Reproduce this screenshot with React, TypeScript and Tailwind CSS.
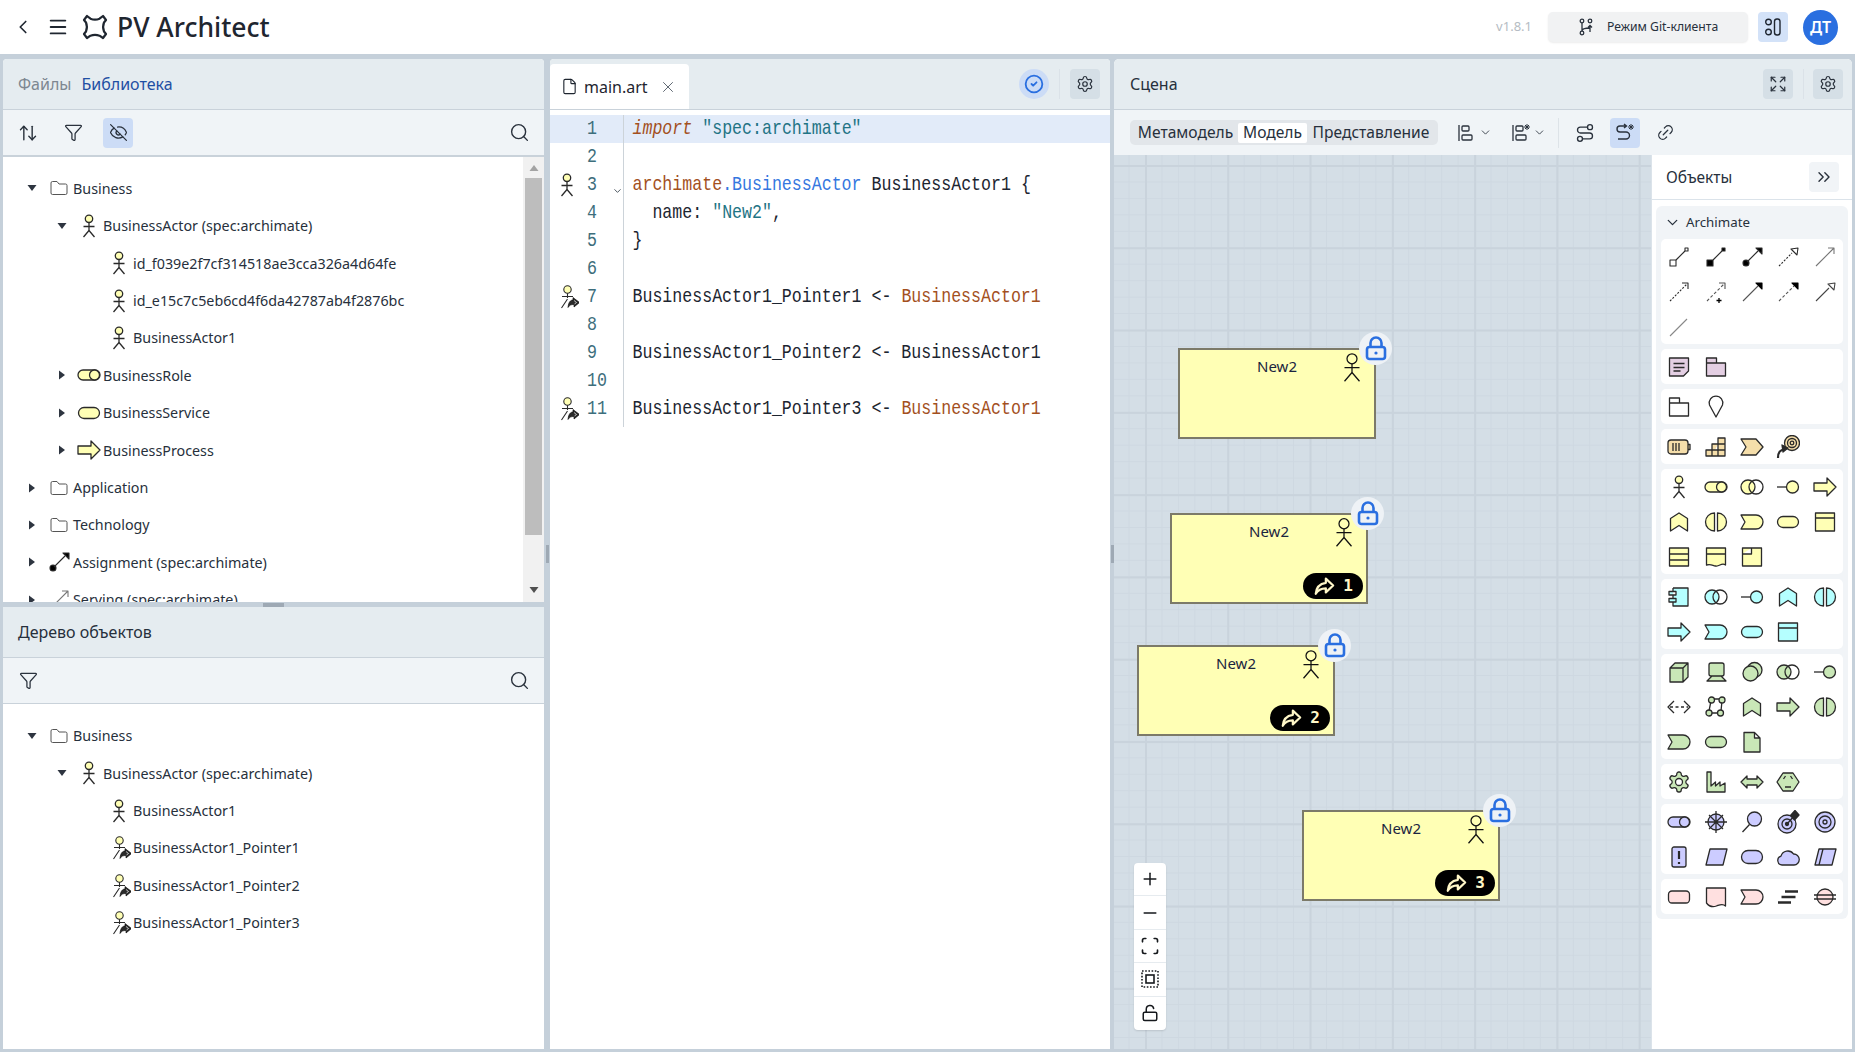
import type { ReactNode } from "react";
import {
  ArrowUpDown,
  ChevronDown,
  ChevronLeft,
  ChevronsRight,
  CircleCheck,
  EyeOff,
  Expand,
  File,
  Funnel,
  Link2,
  LockOpen,
  Menu,
  Minus,
  Plus,
  Route,
  Scan,
  Search,
  Settings,
  X,
} from "lucide-react";

const YELLOW = "#ffffb5";
const CYAN = "#b5ffff";
const GREEN = "#c9e7b7";
const ORANGE = "#f5deaa";
const VIOLET = "#ccccff";
const ROSE = "#ffe0e0";
const PINK = "#e4cfe3";
const INK = "#2a2a2a";

const GEAR =
  "M12.22 2h-.44a2 2 0 0 0-2 2v.18a2 2 0 0 1-1 1.73l-.43.25a2 2 0 0 1-2 0l-.15-.08a2 2 0 0 0-2.73.73l-.22.38a2 2 0 0 0 .73 2.73l.15.1a2 2 0 0 1 1 1.72v.51a2 2 0 0 1-1 1.74l-.15.09a2 2 0 0 0-.73 2.73l.22.38a2 2 0 0 0 2.73.73l.15-.08a2 2 0 0 1 2 0l.43.25a2 2 0 0 1 1 1.73V20a2 2 0 0 0 2 2h.44a2 2 0 0 0 2-2v-.18a2 2 0 0 1 1-1.73l.43-.25a2 2 0 0 1 2 0l.15.08a2 2 0 0 0 2.73-.73l.22-.39a2 2 0 0 0-.73-2.73l-.15-.08a2 2 0 0 1-1-1.74v-.5a2 2 0 0 1 1-1.74l.15-.09a2 2 0 0 0 .73-2.73l-.22-.38a2 2 0 0 0-2.73-.73l-.15.08a2 2 0 0 1-2 0l-.43-.25a2 2 0 0 1-1-1.73V4a2 2 0 0 0-2-2z";

function shape(name: string, f: string): ReactNode {
  switch (name) {
    case "actor":
      return (
        <>
          <circle cx="12" cy="4.800" r="3.700" fill={f} />
          <path d="M12 8.500V16.500M6.500 12.500h11M12 16.500l-5.500 6.500M12 16.500l5.500 6.500" fill="none" />
        </>
      );
    case "role":
      return (
        <>
          <path d="M6 7h12a5 5 0 0 1 0 10H6a5 5 0 0 1 0-10z" fill={f} />
          <circle cx="17.500" cy="12" r="5" fill={f} />
        </>
      );
    case "collab":
      return (
        <>
          <circle cx="8" cy="12" r="7" fill={f} />
          <circle cx="16" cy="12" r="7" fill="none" />
        </>
      );
    case "iface":
      return (
        <>
          <path d="M1 12h9" />
          <circle cx="16.500" cy="12" r="6" fill={f} />
        </>
      );
    case "process":
      return <path d="M1 8h13V3l9 9-9 9v-5H1z" fill={f} />;
    case "func":
      return <path d="M3.500 21V8.500L12 3l8.500 5.500V21L12 15.500z" fill={f} />;
    case "interaction":
      return <path d="M10.500 3a9 9 0 0 0 0 18zM13.500 3a9 9 0 0 1 0 18z" fill={f} />;
    case "event":
      return <path d="M1 5h15a7 7 0 0 1 0 14H1l4-7z" fill={f} />;
    case "service":
      return <path d="M7 6.500h10a5.500 5.500 0 0 1 0 11H7a5.500 5.500 0 0 1 0-11z" fill={f} />;
    case "object":
      return <path d="M2.500 3h19v18h-19zM2.500 8h19" fill={f} />;
    case "contract":
      return <path d="M2.500 3h19v18h-19zM2.500 9h19M2.500 15h19" fill={f} />;
    case "repr":
      return <path d="M2.500 3h19v17c-4-3-6 2-10 1s-5-2-9-1zM2.500 9h19" fill={f} />;
    case "product":
      return <path d="M2.500 3h19v18h-19zM2.500 9h9V3" fill={f} />;
    case "component":
      return <path d="M6 3h15v18H6v-4H2v-3.500h7V17H6M6 13.500V10M6 3v3.500H2V10h7V6.500H6" fill={f} />;
    case "node":
      return <path d="M3 8l5-5h13v14l-5 5H3zM3 8h13v14M16 8l5-5" fill={f} />;
    case "device":
      return <path d="M7 3h11a2 2 0 0 1 2 2v9a2 2 0 0 1-2 2H7a2 2 0 0 1-2-2V5a2 2 0 0 1 2-2zM8 16l-5 5h19l-5-5" fill={f} />;
    case "syssw":
      return (
        <>
          <circle cx="14.500" cy="10" r="7.500" fill={f} />
          <circle cx="10.500" cy="13.500" r="7.500" fill={f} />
        </>
      );
    case "path":
      return (
        <>
          <path d="M7 6l-6 6 6 6M17 6l6 6-6 6" fill="none" />
          <path d="M3 12h18" strokeDasharray="3 2.500" fill="none" />
        </>
      );
    case "network":
      return (
        <>
          <path d="M8 4h10M5 18h12M7 6l-2 10M18 6l-1 10" fill="none" />
          <circle cx="7.500" cy="5" r="3" fill={f} />
          <circle cx="18" cy="5" r="3" fill={f} />
          <circle cx="5" cy="18" r="3" fill={f} />
          <circle cx="16.500" cy="18" r="3" fill={f} />
        </>
      );
    case "artifact":
      return <path d="M4 2.500h10.500l5.500 5.500v14H4zM14.500 2.500V8H20" fill={f} />;
    case "equipment":
      return (
        <>
          <path d={GEAR} fill={f} />
          <circle cx="12" cy="12" r="3.500" fill="#fff" />
        </>
      );
    case "factory":
      return <path d="M3 2h4v14l4.500-4v4l4.500-4v4l5-3v9H3z" fill={f} />;
    case "distribution":
      return <path d="M1 12l6-6v3h10V6l6 6-6 6v-3H7v3z" fill={f} />;
    case "material":
      return <path d="M7 3h10l6 9-6 9H7l-6-9zM7.500 9l2-3M16.500 9l-2-3M9 17h6" fill={f} />;
    case "driver":
      return (
        <>
          <circle cx="12" cy="12" r="8" fill={f} />
          <path d="M1 12h22M12 1v22M5 5l14 14M19 5L5 19" fill="none" />
        </>
      );
    case "assessment":
      return (
        <>
          <path d="M9.500 14.500L2.500 22" fill="none" />
          <circle cx="14.500" cy="9" r="7" fill={f} />
        </>
      );
    case "outcome":
      return (
        <>
          <circle cx="11" cy="14" r="9" fill={f} />
          <circle cx="11" cy="14" r="5" fill={f} />
          <circle cx="11" cy="14" r="1.500" fill={INK} />
          <path d="M11 14L19 5" fill="none" />
          <path d="M14.500 5.500L19 .5l4 4.500-4.500 5z" fill={INK} />
        </>
      );
    case "goal":
      return (
        <>
          <circle cx="12" cy="12" r="10" fill={f} />
          <circle cx="12" cy="12" r="6" fill={f} />
          <circle cx="12" cy="12" r="2" fill={f} />
        </>
      );
    case "principle":
      return (
        <>
          <path d="M7 2h10a2 2 0 0 1 2 2v16a2 2 0 0 1-2 2H7a2 2 0 0 1-2-2V4a2 2 0 0 1 2-2z" fill={f} />
          <path d="M12 6v8M12 17v2" strokeWidth="2.200" fill="none" />
        </>
      );
    case "requirement":
      return <path d="M6 4h17l-4 16H2z" fill={f} />;
    case "value":
      return <path d="M8 5.500h8a6.500 6.500 0 0 1 0 13H8a6.500 6.500 0 0 1 0-13z" fill={f} />;
    case "meaning":
      return <path d="M6 20a4.500 4.500 0 0 1-1-8.800A7 7 0 0 1 17.500 9 5.500 5.500 0 0 1 18 20z" fill={f} />;
    case "constraint":
      return <path d="M6 4h17l-4 16H2zM10 4L6 20" fill={f} />;
    case "work":
      return <rect x="1.500" y="6" width="21" height="12" rx="3.500" fill={f} />;
    case "deliverable":
      return <path d="M2.500 3h19v18c-3-3-6-1-9 0s-7 1-10-3z" fill={f} />;
    case "plateau":
      return <path d="M9 6.500h13M5.500 12h14M2 17.500h13" strokeWidth="2.400" fill="none" />;
    case "gap":
      return (
        <>
          <circle cx="12" cy="12" r="8" fill={f} />
          <path d="M1 10h22M1 14h22" fill="none" />
        </>
      );
    case "resource":
      return (
        <>
          <path d="M4 5h14a3 3 0 0 1 3 3v8a3 3 0 0 1-3 3H4a3 3 0 0 1-3-3V8a3 3 0 0 1 3-3zM21 9.500h2v5h-2" fill={f} />
          <path d="M6 8v8M9 8v8M12 8v8" fill="none" />
        </>
      );
    case "capability":
      return <path d="M2 21v-6h6V9h6V3h7v18zM8 21v-6h6V9M14 21v-6h7M2 15h6M14 9h7" fill={f} />;
    case "stream":
      return <path d="M1 4h15l7 8-7 8H1l5-8z" fill={f} />;
    case "course":
      return (
        <>
          <circle cx="16" cy="8" r="7.500" fill={f} />
          <circle cx="16" cy="8" r="4.500" fill={f} />
          <circle cx="16" cy="8" r="1.800" fill={f} />
          <path d="M2 23c0-6 2-8 7-9" strokeWidth="2.200" fill="none" />
          <path d="M6 10l6 3-5 4z" fill={INK} />
        </>
      );
    case "note":
      return <path d="M2.500 3h19v13l-5 5h-14zM6.500 8.500h11M6.500 12.500h11M6.500 16h7" fill={f} />;
    case "group":
      return <path d="M2.500 8V3h10v5h9v13h-19zM2.500 8h10" fill={f} />;
    case "location":
      return <path d="M12 22L5.500 10a6.800 6.800 0 1 1 13 0z" fill={f} />;
    case "comp":
      return (
        <g strokeWidth="1.100" fill="none">
          <rect x="3" y="15" width="6" height="6" />
          <path d="M9 15l9-9" />
          <rect x="18" y="3" width="3" height="3" />
        </g>
      );
    case "agg":
      return (
        <g strokeWidth="1.100">
          <rect x="3" y="15" width="6" height="6" fill="#000" />
          <path d="M9 15l9-9" />
          <rect x="18" y="3" width="3" height="3" fill="#000" />
        </g>
      );
    case "assign":
      return (
        <g strokeWidth="1.100">
          <circle cx="6" cy="18" r="3" fill="#000" />
          <path d="M7 17L18 6" />
          <path d="M16 3h6v6z" fill="#000" />
        </g>
      );
    case "realize":
      return (
        <g strokeWidth="1.100">
          <path d="M3 21l13-13" strokeDasharray="2 1.500" fill="none" />
          <path d="M15 4l7-1-1 7z" fill="#fff" />
        </g>
      );
    case "serving":
      return <path d="M3 21L21 3M15 3h6v6" fill="none" stroke="#777" strokeWidth="1.100" />;
    case "access":
      return (
        <g strokeWidth="1.100" fill="none">
          <path d="M3 21L20 4" strokeDasharray="2 1.500" />
          <path d="M15 3h6v6" />
        </g>
      );
    case "influence":
      return (
        <g strokeWidth="1.100" fill="none" stroke="#555">
          <path d="M3 21L20 4" strokeDasharray="3 2" />
          <path d="M15 3h6v6" />
          <path d="M15 18v5M12.500 20.500h5" stroke="#000" strokeWidth="1.300" />
        </g>
      );
    case "trigger":
      return (
        <g strokeWidth="1.100" stroke="#555">
          <path d="M3 21L18 6" />
          <path d="M16 3h6v6z" fill="#000" stroke="#000" />
        </g>
      );
    case "flow":
      return (
        <g strokeWidth="1.100" stroke="#555">
          <path d="M3 21L18 6" strokeDasharray="3 2" />
          <path d="M16 3h6v6z" fill="#000" stroke="#000" />
        </g>
      );
    case "special":
      return (
        <g strokeWidth="1.100" stroke="#444">
          <path d="M3 21l13-13" />
          <path d="M15 4l7-1-1 7z" fill="#fff" />
        </g>
      );
    case "assoc":
      return <path d="M3 21L20 4" stroke="#888" strokeWidth="1.100" />;
    case "folder":
      return <path d="M4 7a1.500 1.500 0 0 1 1.500-1.500h4.500l2 2.500h6.500A1.500 1.500 0 0 1 20 9.500v7.500a1.500 1.500 0 0 1-1.500 1.500h-13A1.500 1.500 0 0 1 4 17z" fill="#fff" stroke="#555" strokeWidth="1" />;
    case "pointer":
      return (
        <>
          <g strokeWidth="1.100">
            <circle cx="12.500" cy="4.500" r="3.700" fill={f} />
            <path d="M12.500 8.200V13M7 11.500h11M12.500 14l-6 9" fill="none" />
          </g>
          <path d="M18 12.500l6.500 5-5.500 4.500v-2.500c-3 0-4.500 .5-6 3 .5-5.500 2.500-7.500 5-7.500z" fill={INK} stroke="#000" strokeWidth=".6" />
          <path d="M19 15.500l2.500 2-2 1.500" fill="none" stroke="#fff" strokeWidth=".7" />
        </>
      );
    default:
      return null;
  }
}

function Glyph({ name, fill = "#fff", size = 24 }: { name: string; fill?: string; size?: number }) {
  return (
    <svg width={size} height={size} viewBox="0 0 24 24" stroke={INK} strokeWidth="1.300" strokeLinejoin="round" className="shrink-0">
      {shape(name, fill)}
    </svg>
  );
}

function Logo() {
  return (
    <svg width="26" height="26" viewBox="0 0 26 26" fill="none" stroke="#1f2630" strokeWidth="2.200" strokeLinejoin="round">
      <path d="M5 2l3.500 2.700c3 1.300 6 1.300 9 0L21 2l3 4-2 2.500c-1.200 3-1.200 6 0 9l2 2.500-3 4-3.500-2.300c-3-1.200-6-1.200-9 0L5 24l-3-4 2-2.500c1.200-3 1.200-6 0-9L2 6z" />
    </svg>
  );
}

function Triangle({ open }: { open: boolean }) {
  return open ? (
    <svg width="10" height="6" viewBox="0 0 10 6" fill="#2e3540">
      <path d="M0.500 0h9L5 6z" />
    </svg>
  ) : (
    <svg width="6" height="10" viewBox="0 0 6 10" fill="#2e3540">
      <path d="M0 .5v9L6 5z" />
    </svg>
  );
}

const INDENT = ["pl-[24px]", "pl-[54px]", "pl-[84px]"];

function TreeRow(props: { level: number; open?: boolean; icon: string; fill?: string; label: string }) {
  return (
    <div className={`flex h-[37.4px] shrink-0 items-center ${INDENT[props.level]}`}>
      <span className="flex w-[10px] justify-center">
        {props.open !== undefined && <Triangle open={props.open} />}
      </span>
      <span className="flex w-[36px] justify-end pr-[2px]">
        <Glyph name={props.icon} fill={props.fill} />
      </span>
      <span className="whitespace-nowrap text-[14.3px] text-[#27303c]">{props.label}</span>
    </div>
  );
}

function TitleBar({ children }: { children: ReactNode }) {
  return (
    <div className="flex h-[51px] shrink-0 items-center border-b border-[#c9d2da] bg-[#e5ecf0]">{children}</div>
  );
}

function IconBtn({ children, active, soft }: { children: ReactNode; active?: boolean; soft?: boolean }) {
  return (
    <button
      className={`flex h-[30px] w-[30px] items-center justify-center rounded-[4px] text-[#2a323d] ${
        active ? "bg-[#ccdcf6]" : soft ? "bg-[#d5dfe6]" : ""
      }`}
    >
      {children}
    </button>
  );
}

function Scrollbar() {
  return (
    <div className="flex w-[21px] shrink-0 flex-col items-center bg-[#f1f1f1]">
      <div className="flex h-[21px] w-full shrink-0 items-center justify-center">
        <svg width="10" height="6" viewBox="0 0 10 6" fill="#a3a3a3">
          <path d="M0.500 6h9L5 0z" />
        </svg>
      </div>
      <div className="h-[357px] w-[17px] shrink-0 bg-[#bdbdbd]" />
      <div className="flex flex-1 items-end pb-[9px]">
        <svg width="10" height="6" viewBox="0 0 10 6" fill="#505050">
          <path d="M0.500 0h9L5 6z" />
        </svg>
      </div>
    </div>
  );
}

function LeftColumn() {
  return (
    <div className="flex w-[541px] shrink-0 flex-col">
      <section className="flex h-[543px] shrink-0 flex-col overflow-hidden rounded-t-[4px] bg-white">
        <TitleBar>
          <span className="ml-[15px] text-[16px] text-[#7d8791]">Файлы</span>
          <span className="ml-[10px] text-[16px] text-[#1f4fa3]">Библиотека</span>
        </TitleBar>
        <div className="flex h-[47px] shrink-0 items-center border-b-2 border-[#c9d2da] bg-[#f0f4f7] pl-[10px] pr-[10px]">
          <IconBtn>
            <ArrowUpDown size={20} strokeWidth={1.7} />
          </IconBtn>
          <span className="ml-[15px]">
            <IconBtn>
              <Funnel size={19} strokeWidth={1.6} />
            </IconBtn>
          </span>
          <span className="ml-[15px]">
            <IconBtn active>
              <EyeOff size={19} strokeWidth={1.6} />
            </IconBtn>
          </span>
          <span className="ml-auto">
            <IconBtn>
              <Search size={21} strokeWidth={1.6} />
            </IconBtn>
          </span>
        </div>
        <div className="flex min-h-0 flex-1">
          <div className="min-w-0 flex-1 overflow-hidden pt-[12.800px]">
            <TreeRow level={0} open icon="folder" label="Business" />
            <TreeRow level={1} open icon="actor" fill={YELLOW} label="BusinessActor (spec:archimate)" />
            <TreeRow level={2} icon="actor" fill={YELLOW} label="id_f039e2f7cf314518ae3cca326a4d64fe" />
            <TreeRow level={2} icon="actor" fill={YELLOW} label="id_e15c7c5eb6cd4f6da42787ab4f2876bc" />
            <TreeRow level={2} icon="actor" fill={YELLOW} label="BusinessActor1" />
            <TreeRow level={1} open={false} icon="role" fill={YELLOW} label="BusinessRole" />
            <TreeRow level={1} open={false} icon="service" fill={YELLOW} label="BusinessService" />
            <TreeRow level={1} open={false} icon="process" fill={YELLOW} label="BusinessProcess" />
            <TreeRow level={0} open={false} icon="folder" label="Application" />
            <TreeRow level={0} open={false} icon="folder" label="Technology" />
            <TreeRow level={0} open={false} icon="assign" label="Assignment (spec:archimate)" />
            <TreeRow level={0} open={false} icon="serving" label="Serving (spec:archimate)" />
          </div>
          <Scrollbar />
        </div>
      </section>
      <div className="flex h-[5px] shrink-0 items-center justify-center">
        <div className="h-[4px] w-[21px] bg-[#9ea9b4]" />
      </div>
      <section className="flex min-h-0 flex-1 flex-col overflow-hidden bg-white">
        <TitleBar>
          <span className="ml-[15px] text-[16px] text-[#27303c]">Дерево объектов</span>
        </TitleBar>
        <div className="flex h-[46px] shrink-0 items-center border-b border-[#c9d2da] bg-[#f0f4f7] px-[10px]">
          <IconBtn>
            <Funnel size={19} strokeWidth={1.6} />
          </IconBtn>
          <span className="ml-auto">
            <IconBtn>
              <Search size={21} strokeWidth={1.6} />
            </IconBtn>
          </span>
        </div>
        <div className="pt-[13.300px]">
          <TreeRow level={0} open icon="folder" label="Business" />
          <TreeRow level={1} open icon="actor" fill={YELLOW} label="BusinessActor (spec:archimate)" />
          <TreeRow level={2} icon="actor" fill={YELLOW} label="BusinessActor1" />
          <TreeRow level={2} icon="pointer" fill={YELLOW} label="BusinessActor1_Pointer1" />
          <TreeRow level={2} icon="pointer" fill={YELLOW} label="BusinessActor1_Pointer2" />
          <TreeRow level={2} icon="pointer" fill={YELLOW} label="BusinessActor1_Pointer3" />
        </div>
      </section>
    </div>
  );
}

const BROWN = "text-[#a3501e]";
const BLUE = "text-[#3577e0]";
const TEAL = "text-[#1f7485]";
const DARK = "text-[#1c2530]";

type Line = { gutter?: string; fold?: boolean; body?: ReactNode };

const CODE: Line[] = [
  {
    body: (
      <>
        <span className={`${BROWN} italic`}>import</span> <span className={TEAL}>"spec:archimate"</span>
      </>
    ),
  },
  {},
  {
    gutter: "actor",
    fold: true,
    body: (
      <>
        <span className={BROWN}>archimate</span>
        <span className={BLUE}>.BusinessActor</span> <span className={DARK}>BusinessActor1 {"{"}</span>
      </>
    ),
  },
  {
    body: (
      <>
        <span className={DARK}>{"  name: "}</span>
        <span className={TEAL}>"New2"</span>
        <span className={DARK}>,</span>
      </>
    ),
  },
  { body: <span className={DARK}>{"}"}</span> },
  {},
  {
    gutter: "pointer",
    body: (
      <>
        <span className={DARK}>{"BusinessActor1_Pointer1 <- "}</span>
        <span className={BROWN}>BusinessActor1</span>
      </>
    ),
  },
  {},
  { body: <span className={DARK}>{"BusinessActor1_Pointer2 <- BusinessActor1"}</span> },
  {},
  {
    gutter: "pointer",
    body: (
      <>
        <span className={DARK}>{"BusinessActor1_Pointer3 <- "}</span>
        <span className={BROWN}>BusinessActor1</span>
      </>
    ),
  },
];

function Editor() {
  return (
    <section className="flex w-[560px] shrink-0 flex-col overflow-hidden rounded-t-[4px] bg-white">
      <div className="flex h-[51px] shrink-0 items-end border-b border-[#c9d2da] bg-[#e5ecf0]">
        <div className="flex h-[45px] w-[139px] items-center rounded-t-[4px] bg-white pl-[11px] text-[#1f2630]">
          <File size={17} strokeWidth={1.6} />
          <span className="ml-[6px] text-[16px]">main.art</span>
          <X size={18} strokeWidth={1.3} className="ml-[11px] text-[#5d6670]" />
        </div>
        <div className="ml-auto flex h-full items-center pr-[10px]">
          <button className="flex h-[30px] w-[30px] items-center justify-center rounded-full bg-[#ccdcf6] text-[#2a6fe0]">
            <CircleCheck size={20} strokeWidth={2.200} />
          </button>
          <div className="mx-[10px] h-[30px] w-px bg-[#dbe2e8]" />
          <IconBtn soft>
            <Settings size={18} strokeWidth={1.6} />
          </IconBtn>
        </div>
      </div>
      <div className="pt-[5px] font-['Liberation_Mono',monospace] text-[16.600px]">
        {CODE.map((line, i) => (
          <div key={i} className={`flex h-[28px] items-center ${i === 0 ? "bg-[#e2ebf9]" : ""}`}>
            <div className="flex h-full w-[74px] shrink-0 items-center border-r border-[#ccd3d9]">
              <span className="flex w-[37px] shrink-0 justify-center pr-[3px]">
                {line.gutter && <Glyph name={line.gutter} fill={YELLOW} />}
              </span>
              <span className="w-[25px] shrink-0 origin-center scale-y-[1.2] text-[#3d6e7c]">{i + 1}</span>
              {line.fold && <ChevronDown size={12} strokeWidth={2} className="mt-[11px] text-[#3f4a54]" />}
            </div>
            <div className="origin-center scale-y-[1.2] whitespace-pre pl-[8.500px]">{line.body}</div>
          </div>
        ))}
        <div className="h-[4px] w-[74px] border-r border-[#ccd3d9]" />
      </div>
    </section>
  );
}

function LockBadge() {
  return (
    <span className="absolute right-[-18px] top-[-18px] flex h-[33px] w-[33px] items-center justify-center rounded-full bg-[#eef2f6]">
      <svg width="24" height="26" viewBox="0 0 24 26" fill="none" stroke="#2a6fe0" strokeWidth="2.600">
        <rect x="3" y="11" width="18" height="12" rx="2.500" />
        <path d="M6.500 11V7a5.500 5.500 0 0 1 11 0v4" />
        <circle cx="12" cy="17" r="1.600" fill="#2a6fe0" stroke="none" />
      </svg>
    </span>
  );
}

function Share({ size = 22 }: { size?: number }) {
  return (
    <svg width={size} height={size} viewBox="0 0 24 24" fill="#000" stroke="#fff7c8" strokeWidth="2.400" strokeLinejoin="round">
      <path d="M14 4l8 7.500L14 19v-4.500c-5 0-8.500 1.500-11 6 .5-7 4.500-11 11-12z" />
    </svg>
  );
}

const NODE_POS = [
  { pos: "left-[64px] top-[193px]" },
  { pos: "left-[56px] top-[358px]", n: 1 },
  { pos: "left-[23px] top-[490px]", n: 2 },
  { pos: "left-[188px] top-[655px]", n: 3 },
];

function ElementNode({ pos, n }: { pos: string; n?: number }) {
  return (
    <div className={`absolute h-[91px] w-[198px] border-2 border-[#7c7a69] bg-[#ffffb5] ${pos}`}>
      <span className="absolute left-0 right-0 top-[5px] text-center text-[15px] text-[#1b2540]">New2</span>
      <span className="absolute right-[7px] top-[2px]">
        <svg width="30" height="31" viewBox="0 0 24 24" fill="none" stroke="#111" strokeWidth="1">
          <circle cx="12" cy="5" r="4" />
          <path d="M12 9v7M6 12h12M12 16l-6 7M12 16l6 7" />
        </svg>
      </span>
      <LockBadge />
      {n && (
        <span className="absolute bottom-[3px] right-[3px] flex h-[26px] w-[60px] items-center justify-center gap-[8px] rounded-full bg-black">
          <Share />
          <span className="font-['DejaVu_Sans_Mono',monospace] text-[16px] font-bold text-[#fff7c8]">{n}</span>
        </span>
      )}
    </div>
  );
}

function ZoomBar() {
  const cell = "flex h-[33.400px] items-center justify-center border-b border-[#e6ebef] text-[#16191d] last:border-b-0";
  return (
    <div className="absolute left-[20px] top-[708px] w-[32px] rounded-[4px] bg-white shadow-[0_1px_2px_rgba(0,0,0,0.12)]">
      <div className={cell}>
        <Plus size={20} strokeWidth={1.800} />
      </div>
      <div className={cell}>
        <Minus size={20} strokeWidth={1.800} />
      </div>
      <div className={cell}>
        <Scan size={20} strokeWidth={2} />
      </div>
      <div className={cell}>
        <svg width="18" height="18" viewBox="0 0 18 18" fill="none" stroke="#16191d">
          <rect x="1" y="1" width="16" height="16" strokeWidth="1.600" strokeDasharray="1.600 1.600" />
          <rect x="5" y="5" width="8" height="8" strokeWidth="1.600" />
        </svg>
      </div>
      <div className={cell}>
        <LockOpen size={18} strokeWidth={2} />
      </div>
    </div>
  );
}

const PALETTE: { items: [string, string?][] }[] = [
  {
    items: [
      ["comp"], ["agg"], ["assign"], ["realize"], ["serving"],
      ["access"], ["influence"], ["trigger"], ["flow"], ["special"],
      ["assoc"],
    ],
  },
  { items: [["note", PINK], ["group", PINK]] },
  { items: [["group", "#fff"], ["location", "#fff"]] },
  { items: [["resource", ORANGE], ["capability", ORANGE], ["stream", ORANGE], ["course", ORANGE]] },
  {
    items: [
      ["actor", YELLOW], ["role", YELLOW], ["collab", YELLOW], ["iface", YELLOW], ["process", YELLOW],
      ["func", YELLOW], ["interaction", YELLOW], ["event", YELLOW], ["service", YELLOW], ["object", YELLOW],
      ["contract", YELLOW], ["repr", YELLOW], ["product", YELLOW],
    ],
  },
  {
    items: [
      ["component", CYAN], ["collab", CYAN], ["iface", CYAN], ["func", CYAN], ["interaction", CYAN],
      ["process", CYAN], ["event", CYAN], ["service", CYAN], ["object", CYAN],
    ],
  },
  {
    items: [
      ["node", GREEN], ["device", GREEN], ["syssw", GREEN], ["collab", GREEN], ["iface", GREEN],
      ["path", GREEN], ["network", GREEN], ["func", GREEN], ["process", GREEN], ["interaction", GREEN],
      ["event", GREEN], ["service", GREEN], ["artifact", GREEN],
    ],
  },
  { items: [["equipment", GREEN], ["factory", GREEN], ["distribution", GREEN], ["material", GREEN]] },
  {
    items: [
      ["role", VIOLET], ["driver", VIOLET], ["assessment", VIOLET], ["outcome", VIOLET], ["goal", VIOLET],
      ["principle", VIOLET], ["requirement", VIOLET], ["value", VIOLET], ["meaning", VIOLET], ["constraint", VIOLET],
    ],
  },
  { items: [["work", ROSE], ["deliverable", ROSE], ["event", ROSE], ["plateau", ROSE], ["gap", ROSE]] },
];

function ObjectsPanel() {
  return (
    <aside className="flex w-[201px] shrink-0 flex-col border-l border-[#dbe3ea] bg-white">
      <div className="flex h-[45px] shrink-0 items-center border-b border-[#dbe3ea] pl-[14px] pr-[13px]">
        <span className="mt-[2px] text-[15.500px] text-[#27303c]">Объекты</span>
        <button className="ml-auto flex h-[30px] w-[30px] items-center justify-center rounded-[4px] bg-[#f1f4f7] text-[#2a323d]">
          <ChevronsRight size={20} strokeWidth={1.700} />
        </button>
      </div>
      <div className="mx-[4px] mt-[6px] rounded-[6px] bg-[#f1f4f7] px-[5px] pb-[5px]">
        <div className="flex h-[33px] items-center text-[#27303c]">
          <ChevronDown size={17} strokeWidth={1.800} className="ml-[3px]" />
          <span className="ml-[5px] text-[13.300px]">Archimate</span>
        </div>
        <div className="flex flex-col gap-[5px]">
          {PALETTE.map((group, i) => (
            <div key={i} className="grid grid-cols-5 rounded-[5px] bg-white">
              {group.items.map(([name, fill], j) => (
                <span key={j} className="flex h-[35px] items-center justify-center">
                  <Glyph name={name} fill={fill} />
                </span>
              ))}
            </div>
          ))}
        </div>
      </div>
    </aside>
  );
}

function AlignIcon({ spark }: { spark?: boolean }) {
  return (
    <svg width="20" height="20" viewBox="0 0 20 20" fill="none" stroke="#2a323d" strokeWidth="1.300">
      <path d="M2 2v16" />
      <rect x="5" y="3" width="7" height="5" rx="1" />
      <rect x="5" y="12" width="10" height="5" rx="1" />
      {spark && <path d="M16 1v6M13 4h6M14 2l4 4M18 2l-4 4" strokeWidth="1" />}
    </svg>
  );
}

function Scene() {
  return (
    <section className="flex min-w-0 flex-1 flex-col overflow-hidden rounded-t-[5px] bg-white">
      <TitleBar>
        <span className="ml-[16px] text-[16px] text-[#27303c]">Сцена</span>
        <div className="ml-auto flex items-center pr-[9px]">
          <IconBtn soft>
            <Expand size={18} strokeWidth={1.600} />
          </IconBtn>
          <div className="mx-[9.500px] h-[30px] w-px bg-[#dbe2e8]" />
          <IconBtn soft>
            <Settings size={18} strokeWidth={1.600} />
          </IconBtn>
        </div>
      </TitleBar>
      <div className="flex h-[45px] shrink-0 items-center bg-[#f0f4f7] pl-[16px]">
        <div className="flex h-[25px] w-[308px] items-center rounded-[5px] bg-[#e2e6ea] px-[3px] text-[15.600px] text-[#27303c]">
          <span className="w-[105px] shrink-0 text-center">Метамодель</span>
          <span className="flex h-[20px] w-[69px] shrink-0 items-center justify-center rounded-[2px] bg-white">Модель</span>
          <span className="flex-1 whitespace-nowrap text-center">Представление</span>
        </div>
        <span className="ml-[19px] flex items-center gap-[2px]">
          <AlignIcon />
          <ChevronDown size={13} strokeWidth={1.600} className="text-[#2a323d]" />
        </span>
        <span className="ml-[19px] flex items-center gap-[2px]">
          <AlignIcon spark />
          <ChevronDown size={13} strokeWidth={1.600} className="text-[#2a323d]" />
        </span>
        <div className="ml-[12px] mr-[11px] h-[30px] w-px bg-[#dde3e8]" />
        <IconBtn>
          <Route size={20} strokeWidth={1.600} />
        </IconBtn>
        <span className="ml-[10px]">
          <IconBtn active>
            <svg width="20" height="20" viewBox="0 0 20 20" fill="none" stroke="#2a323d" strokeWidth="1.400">
              <path d="M11 3H5a2.500 2.500 0 0 0 0 6h6a3 3 0 0 1 0 7H3M9 1l2.500 2L9 5" />
              <path d="M16 1v6M13 4h6M14 2l4 4M18 2l-4 4" strokeWidth="1" />
            </svg>
          </IconBtn>
        </span>
        <span className="ml-[10px]">
          <IconBtn>
            <Link2 size={19} strokeWidth={1.600} className="-rotate-45" />
          </IconBtn>
        </span>
      </div>
      <div className="flex min-h-0 flex-1">
        <div className="relative min-w-0 flex-1 overflow-hidden bg-[#d4dee6] bg-[linear-gradient(#c9d3dc_2px,transparent_2px),linear-gradient(90deg,#c9d3dc_2px,transparent_2px),linear-gradient(#ced8e1_1px,transparent_1px),linear-gradient(90deg,#ced8e1_1px,transparent_1px)] bg-[size:82.300px_82.300px,82.300px_82.300px,16.460px_16.460px,16.460px_16.460px] bg-[position:31px_10px]">
          {NODE_POS.map((node) => (
            <ElementNode key={node.pos} pos={node.pos} n={node.n} />
          ))}
          <ZoomBar />
        </div>
        <ObjectsPanel />
      </div>
    </section>
  );
}

function Header() {
  return (
    <header className="flex h-[54px] shrink-0 items-center bg-white text-[#1f2630]">
      <ChevronLeft size={22} strokeWidth={1.800} className="ml-[12px]" />
      <Menu size={22} strokeWidth={2} className="ml-[13px]" />
      <span className="ml-[13px]">
        <Logo />
      </span>
      <span className="ml-[9px] text-[26.500px] font-medium leading-none text-[#1f2630]">PV Architect</span>
      <span className="ml-auto text-[13px] text-[#b5bcc3]">v1.8.1</span>
      <button className="ml-[16px] flex h-[30px] w-[200px] items-center rounded-[5px] bg-[#f1f2f3] pl-[30px] text-[12.200px] text-[#27303c] shadow-[0_1px_2px_rgba(0,0,0,0.08)]">
        <svg width="18" height="18" viewBox="0 0 18 18" fill="none" stroke="#2a323d" strokeWidth="1.300">
          <circle cx="4" cy="3" r="1.800" />
          <circle cx="4" cy="15" r="1.800" />
          <circle cx="12" cy="3" r="1.800" />
          <path d="M4 5v8M4 13c0-2 3-3 8-3M12 14V7.500M10 9.500l2-2 2 2" />
        </svg>
        <span className="ml-[11px]">Режим Git-клиента</span>
      </button>
      <button className="ml-[10px] flex h-[30px] w-[30px] items-center justify-center rounded-[4px] bg-[#d3e2f8]">
        <svg width="18" height="20" viewBox="0 0 18 20" fill="none" stroke="#1f2630" strokeWidth="1.400">
          <circle cx="4.500" cy="5" r="2.800" />
          <circle cx="4.500" cy="15" r="2.800" />
          <rect x="10.500" y="2" width="5.500" height="16" rx="2.500" />
        </svg>
      </button>
      <span className="ml-[15px] mr-[17px] flex h-[35px] w-[35px] items-center justify-center rounded-full bg-[#2a6fe0] text-[16px] font-semibold text-white">
        ДТ
      </span>
    </header>
  );
}

export default function App() {
  return (
    <div className="flex h-screen w-screen flex-col overflow-hidden bg-[#c5d0da] font-['Noto_Sans',sans-serif]">
      <Header />
      <main className="flex min-h-0 flex-1 pb-[3px] pl-[3px] pr-[3px] pt-[5px]">
        <LeftColumn />
        <div className="flex w-[6px] shrink-0 items-center justify-center">
          <div className="h-[18px] w-[3px] bg-[#9ea9b4]" />
        </div>
        <Editor />
        <div className="flex w-[4px] shrink-0 items-center justify-center">
          <div className="h-[18px] w-[3px] bg-[#9ea9b4]" />
        </div>
        <Scene />
      </main>
    </div>
  );
}
